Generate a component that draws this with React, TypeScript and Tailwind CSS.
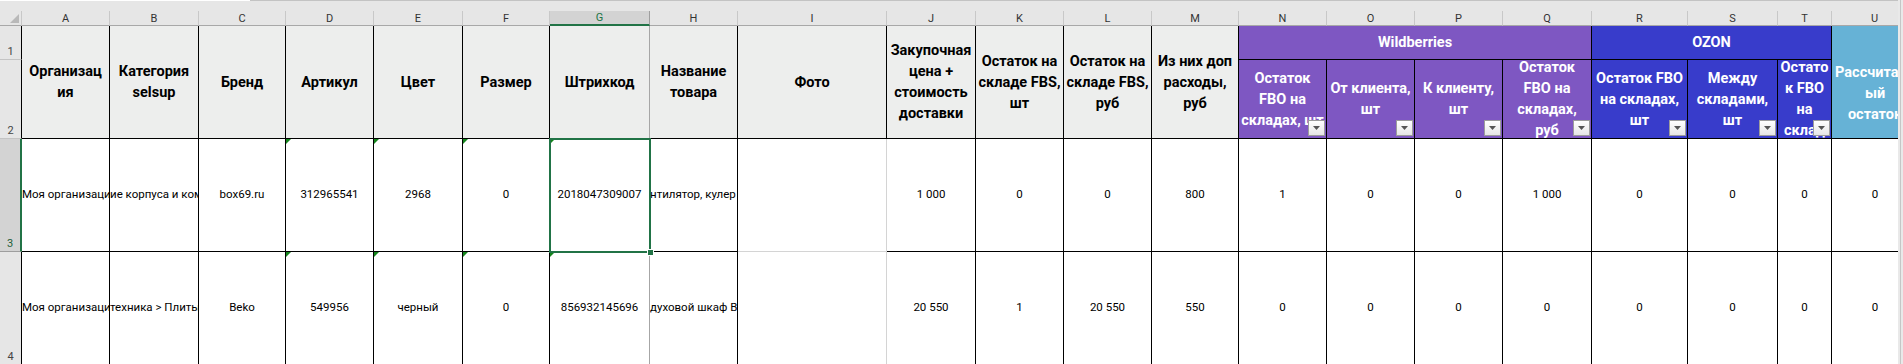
import React from 'react';

const letters = 'ABCDEFGHIJKLMNOPQRSTU'.split('');

type H = { lines: string[]; b?: 'g' };
const greyHeaders: H[] = [
  { lines: ['Организац', 'ия'] },
  { lines: ['Категория', 'selsup'] },
  { lines: ['Бренд'] },
  { lines: ['Артикул'] },
  { lines: ['Цвет'] },
  { lines: ['Размер'] },
  { lines: ['Штрихкод'], b: 'g' },
  { lines: ['Название', 'товара'] },
  { lines: ['Фото'] },
  { lines: ['Закупочная', 'цена +', 'стоимость', 'доставки'] },
  { lines: ['Остаток на', 'складе FBS,', 'шт'] },
  { lines: ['Остаток на', 'складе FBS,', 'руб'] },
  { lines: ['Из них доп', 'расходы,', 'руб'] },
];

type C = { lines: string[]; bg: 'p' | 'b' };
const colored: C[] = [
  { lines: ['Остаток', 'FBO на', 'складах, шт'], bg: 'p' },
  { lines: ['От клиента,', 'шт'], bg: 'p' },
  { lines: ['К клиенту,', 'шт'], bg: 'p' },
  { lines: ['Остаток', 'FBO на', 'складах,', 'руб'], bg: 'p' },
  { lines: ['Остаток FBO', 'на складах,', 'шт'], bg: 'b' },
  { lines: ['Между', 'складами,', 'шт'], bg: 'b' },
  { lines: ['Остато', 'к FBO', 'на', 'склад'], bg: 'b' },
];

type D = { t: string; a?: 'l'; tri?: boolean; b?: 'g' | 'i' | 'u'; sel?: boolean };

const row3: D[] = [
  { t: 'Моя организация', a: 'l' },
  { t: 'ие корпуса и комплектующие', a: 'l' },
  { t: 'box69.ru' },
  { t: '312965541', tri: true },
  { t: '2968', tri: true },
  { t: '0', tri: true },
  { t: '2018047309007', tri: true, b: 'g', sel: true },
  { t: 'нтилятор, кулер для процессора', a: 'l' },
  { t: '', b: 'i' },
  { t: '1 000' },
  { t: '0' },
  { t: '0' },
  { t: '800' },
  { t: '1' },
  { t: '0' },
  { t: '0' },
  { t: '1 000' },
  { t: '0' },
  { t: '0' },
  { t: '0' },
  { t: '0', b: 'u' },
];

const row4: D[] = [
  { t: 'Моя организация', a: 'l' },
  { t: 'техника > Плиты', a: 'l' },
  { t: 'Beko' },
  { t: '549956', tri: true },
  { t: 'черный', tri: true },
  { t: '0', tri: true },
  { t: '856932145696', tri: true, b: 'g' },
  { t: 'духовой шкаф BEKO', a: 'l' },
  { t: '', b: 'i' },
  { t: '20 550' },
  { t: '1' },
  { t: '20 550' },
  { t: '550' },
  { t: '0' },
  { t: '0' },
  { t: '0' },
  { t: '0' },
  { t: '0' },
  { t: '0' },
  { t: '0' },
  { t: '0', b: 'u' },
];

function FilterBtn() {
  return (
    <div className="absolute right-[1px] bottom-[2px] z-10 flex h-[16px] w-[17px] items-center justify-center border border-[#9c9c9c] bg-linear-to-b from-white to-[#e6e6e6]">
      <svg width="7" height="4" viewBox="0 0 7 4">
        <path d="M0 0H7L3.5 4Z" fill="#555555" />
      </svg>
    </div>
  );
}

function Tri() {
  return (
    <svg className="absolute left-0 top-0" width="5" height="5" viewBox="0 0 5 5">
      <polygon points="0,0 5,0 0,5" fill="#14851c" />
    </svg>
  );
}

function RowHead({ n, sel }: { n: string; sel?: boolean }) {
  return (
    <div
      className={`flex items-end justify-center pb-[2px] text-[11px] leading-none border-b ${
        sel
          ? 'bg-[#d3d3d3] text-[#1d5e39] border-r-2 border-r-[#217346] border-b-[#9e9e9e]'
          : 'bg-[#e6e6e6] text-[#444444] border-r border-r-black border-b-[#c4c4c4]'
      }`}
    >
      {n}
    </div>
  );
}

function DataCell({ d }: { d: D }) {
  const border =
    d.b === 'g'
      ? 'border-r border-b border-r-[#a6a6a6] border-b-black'
      : d.b === 'i'
      ? 'border-r border-b border-r-[#d4d4d4] border-b-[#d4d4d4]'
      : d.b === 'u'
      ? 'border-b border-b-black'
      : 'border-r border-b border-r-black border-b-black';
  return (
    <div
      className={`relative flex items-center whitespace-nowrap bg-white text-[11.5px] text-black ${
        d.sel ? 'overflow-visible' : 'overflow-hidden'
      } ${d.a === 'l' ? 'justify-start' : 'justify-center'} ${border}`}
    >
      {d.t}
      {d.tri && <Tri />}
      {d.sel && (
        <div className="pointer-events-none absolute -left-px -top-px -right-[2px] -bottom-[2px] z-10 border-2 border-[#217346]">
          <div className="absolute -right-[5px] -bottom-[5px] h-[7px] w-[7px] border border-white bg-[#217346]" />
        </div>
      )}
    </div>
  );
}

export default function App() {
  return (
    <div className="flex h-[364px] w-[1903px] overflow-hidden bg-[#e6e6e6] font-[Roboto,'Noto_Sans',sans-serif]">
      <div className="w-[1898px] shrink-0 overflow-hidden">
        <div className="grid w-max grid-cols-[22px_88px_89px_87px_88px_89px_87px_100px_88px_149px_89px_88px_88px_87px_88px_88px_88px_89px_96px_90px_54px_86px] grid-rows-[11px_15px_34px_79px_113px_113px]">
          {/* top strip */}
          <div className="col-span-full flex flex-col bg-[#e6e6e6]">
            <div className="flex h-px">
              <div className="w-[250px] bg-white" />
              <div className="flex-1 bg-[#c3c3c3]" />
            </div>
          </div>

          {/* column letters */}
          <div className="relative border-r border-b border-r-[#c8c8c8] border-b-[#a8a8a8] bg-[#e6e6e6]">
            <svg className="absolute bottom-[2px] right-[2px]" width="9" height="9" viewBox="0 0 9 9">
              <polygon points="9,0 9,9 0,9" fill="#b9b9b9" />
            </svg>
          </div>
          {letters.map((l) => (
            <div
              key={l}
              className={`flex items-center justify-center text-[11px] leading-none ${
                l === 'G'
                  ? 'bg-[#d3d3d3] text-[#217346] border-r border-r-[#9e9e9e] border-b-2 border-b-[#217346]'
                  : 'bg-[#e6e6e6] text-[#333333] border-r border-r-[#c8c8c8] border-b border-b-[#a8a8a8]'
              }`}
            >
              {l}
            </div>
          ))}

          {/* header row 1 */}
          <RowHead n="1" />
          {greyHeaders.map((h, i) => (
            <div
              key={i}
              className={`row-span-2 flex flex-col items-center justify-center overflow-hidden bg-[#edeeed] text-[14.5px] font-bold leading-[21px] text-black border-r border-b border-b-black ${
                h.b === 'g' ? 'border-r-[#a6a6a6]' : 'border-r-black'
              }`}
            >
              {h.lines.map((l, j) => (
                <div key={j} className="whitespace-nowrap">
                  {l}
                </div>
              ))}
            </div>
          ))}
          <div className="col-span-4 flex items-center justify-center bg-[#7e57c2] text-[14.5px] font-bold text-white border-r border-b border-r-black border-b-black">
            Wildberries
          </div>
          <div className="col-span-3 flex items-center justify-center bg-[#383ccb] text-[14.5px] font-bold text-white border-r border-b border-r-black border-b-black">
            OZON
          </div>
          <div className="row-span-2 flex flex-col items-center justify-center overflow-hidden bg-[#66b2d6] pt-[23px] text-[14.5px] font-bold leading-[21px] text-white border-b border-b-black">
            <div className="whitespace-nowrap">Рассчитанн</div>
            <div className="whitespace-nowrap">ый</div>
            <div className="whitespace-nowrap">остаток</div>
          </div>

          {/* header row 2 */}
          <RowHead n="2" />
          {colored.map((c, i) => (
            <div
              key={i}
              className={`relative flex flex-col items-center justify-center overflow-hidden text-[14.5px] font-bold leading-[21px] text-white border-r border-b border-r-black border-b-black ${
                i === 0 ? 'col-start-15' : ''
              } ${c.bg === 'p' ? 'bg-[#7e57c2]' : 'bg-[#383ccb]'}`}
            >
              {c.lines.map((l, j) => (
                <div key={j} className="whitespace-nowrap">
                  {l}
                </div>
              ))}
              <FilterBtn />
            </div>
          ))}

          {/* data rows */}
          <RowHead n="3" sel />
          {row3.map((d, i) => (
            <DataCell key={i} d={d} />
          ))}
          <RowHead n="4" />
          {row4.map((d, i) => (
            <DataCell key={i} d={d} />
          ))}
        </div>
      </div>
      <div className="flex h-full w-[5px] shrink-0 bg-[#e9e9e9]">
        <div className="ml-[2px] h-full w-px bg-[#c6c6c6]" />
      </div>
    </div>
  );
}
